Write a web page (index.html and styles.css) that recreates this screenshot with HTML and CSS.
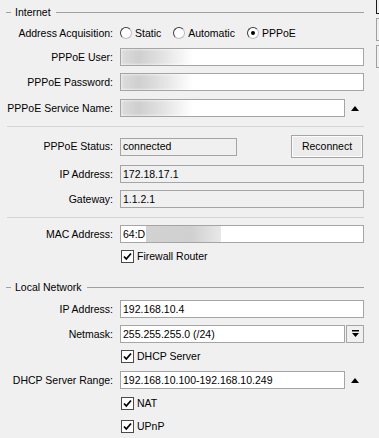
FILE: index.html
```html
<!DOCTYPE html>
<html lang="en">
<head>
    <meta charset="UTF-8">
    <title>Quick Set</title>
    <link rel="stylesheet" href="styles.css">
</head>
<body>
    <div class="page">
        <div class="panel">
            <div class="group-title"><span>Internet</span></div>

            <div class="row radio-row">
                <div class="lbl">Address Acquisition:</div>
                <div class="options">
                    <span class="opt"><span class="radio"></span>Static</span>
                    <span class="opt"><span class="radio"></span>Automatic</span>
                    <span class="opt"><span class="radio on"></span>PPPoE</span>
                </div>
            </div>

            <div class="row mt8">
                <div class="lbl">PPPoE User:</div>
                <div class="field"><span class="blur"></span></div>
            </div>
            <div class="row">
                <div class="lbl">PPPoE Password:</div>
                <div class="field"><span class="blur"></span></div>
            </div>
            <div class="row mt8">
                <div class="lbl">PPPoE Service Name:</div>
                <div class="field short"><span class="blur"></span></div>
                <div class="spin"><span class="up"></span></div>
            </div>

            <!--status section-->
            <div class="sep"></div>

            <div class="row tall mt8">
                <div class="lbl">PPPoE Status:</div>
                <div class="field ro status">connected</div>
                <button class="btn" type="button">Reconnect</button>
            </div>
            <div class="row">
                <div class="lbl">IP Address:</div>
                <div class="field ro">172.18.17.1</div>
            </div>
            <div class="row">
                <div class="lbl">Gateway:</div>
                <div class="field ro">1.1.2.1</div>
            </div>

            <div class="sep"></div>

            <div class="row">
                <div class="lbl">MAC Address:</div>
                <div class="field">64:D<span class="blur mac"></span></div>
            </div>
            <div class="row check">
                <span class="cb"><svg width="11" height="11" viewBox="0 0 11 11"><path d="M2 5.5 L4.3 8 L9 2.5" fill="none" stroke="#000" stroke-width="1.8"/></svg></span>Firewall Router
            </div>

            <div class="group-title local"><span>Local Network</span></div>

            <div class="row mt6">
                <div class="lbl">IP Address:</div>
                <div class="field">192.168.10.4</div>
            </div>
            <div class="row">
                <div class="lbl">Netmask:</div>
                <div class="field short">255.255.255.0 (/24)</div>
                <div class="drop">
                    <svg width="9" height="8" viewBox="0 0 9 8"><rect x="1" y="0" width="7" height="1.5" fill="#000"/><path d="M1 3 L8 3 L4.5 7 Z" fill="#000"/></svg>
                </div>
            </div>
            <div class="row check">
                <span class="cb"><svg width="11" height="11" viewBox="0 0 11 11"><path d="M2 5.5 L4.3 8 L9 2.5" fill="none" stroke="#000" stroke-width="1.8"/></svg></span>DHCP Server
            </div>
            <div class="row mt8">
                <div class="lbl">DHCP Server Range:</div>
                <div class="field short">192.168.10.100-192.168.10.249</div>
                <div class="spin"><span class="up"></span></div>
            </div>
            <div class="row check mt8">
                <span class="cb"><svg width="11" height="11" viewBox="0 0 11 11"><path d="M2 5.5 L4.3 8 L9 2.5" fill="none" stroke="#000" stroke-width="1.8"/></svg></span>NAT
            </div>
            <div class="row check mt10">
                <span class="cb"><svg width="11" height="11" viewBox="0 0 11 11"><path d="M2 5.5 L4.3 8 L9 2.5" fill="none" stroke="#000" stroke-width="1.8"/></svg></span>UPnP
            </div>
        </div>

        <div class="side">
            <div class="side-btn first"></div>
            <div class="side-btn"></div>
            <div class="side-btn"></div>
        </div>
    </div>
</body>
</html>
```

FILE: styles.css
```css
html{
    background: #f0f0f0;
}

body{
    margin: 0;
    overflow: hidden;
    font-family: "Liberation Sans", Arial, sans-serif;
    font-size: 10.5px;
    line-height: 13px;
    color: #000;
}

.page{
    display: flex;
}

.panel{
    width: 364px;
    padding-top: 5px;
}

/* group headers like a fieldset legend */
.group-title{
    display: flex;
    align-items: center;
    height: 14px;
}

.group-title::before{
    content: "";
    width: 5px;
    margin-left: 6px;
    margin-right: 4px;
    border-top: 1px solid #a0a0a0;
}

.group-title::after{
    content: "";
    flex: 1;
    margin-left: 5px;
    border-top: 1px solid #a0a0a0;
}

.group-title.local{
    margin-top: 17px;
}

.row{
    display: flex;
    align-items: center;
    height: 18px;
    margin-top: 7px;
}

.row.tall{
    height: 23px;
}

.mt6{ margin-top: 6px; }
.mt8{ margin-top: 8px; }
.mt10{ margin-top: 10px; }

.radio-row{
    height: 14px;
}

.lbl{
    width: 113px;
    margin-right: 7px;
    text-align: right;
    white-space: nowrap;
    flex: none;
}

.options{
    display: flex;
    gap: 12px;
}

.opt{
    display: flex;
    align-items: center;
    gap: 3px;
}

.radio{
    position: relative;
    width: 12px;
    height: 12px;
    box-sizing: border-box;
    border-radius: 50%;
    border: 1px solid;
    border-color: #3c3c3c #bdbdbd #bdbdbd #3c3c3c;
    background: #fff;
}

.radio.on::after{
    content: "";
    position: absolute;
    left: 3px;
    top: 3px;
    width: 4px;
    height: 4px;
    border-radius: 50%;
    background: #000;
}

.field{
    width: 244px;
    height: 18px;
    box-sizing: border-box;
    border: 1px solid #a5a5a5;
    background: #fff;
    padding: 0 2px;
    display: flex;
    align-items: center;
    white-space: nowrap;
    overflow: hidden;
    flex: none;
}

.field.short{
    width: 225px;
}

.field.ro{
    background: #f0f0f0;
}

.field.status{
    width: 117px;
}

.blur{
    display: block;
    width: 72px;
    height: 16px;
    margin-left: -2px;
    background: linear-gradient(to right, #dcdcdc 0, #cfcfcf 25%, #e4e4e4 60%, #fff 100%);
    filter: blur(1.5px);
}

.blur.mac{
    width: 75px;
    margin-left: 1px;
    background: linear-gradient(to right, #d2d2d2 0, #d0d0d0 60%, #e8e8e8 100%);
    filter: none;
}

.spin{
    width: 19px;
    display: flex;
    justify-content: center;
    align-items: center;
}

.spin .up{
    width: 0;
    height: 0;
    margin-left: 1px;
    border-left: 4.5px solid transparent;
    border-right: 4.5px solid transparent;
    border-bottom: 5px solid #000;
}

.drop{
    width: 18px;
    height: 18px;
    margin-left: 1px;
    box-sizing: border-box;
    border: 1px solid #a5a5a5;
    display: flex;
    justify-content: center;
    align-items: center;
}

.btn{
    width: 72px;
    height: 23px;
    margin-left: 54px;
    padding: 0;
    font: inherit;
    color: #000;
    background: #ececec;
    border: 1px solid #a5a5a5;
    box-shadow: inset 0 0 0 1px #fcfcfc;
}

.sep{
    margin-top: 9px;
    margin-left: 7px;
    border-top: 1px solid #d5d5d5;
}

.row.check{
    height: 13px;
    padding-left: 121px;
}

.cb{
    width: 13px;
    height: 13px;
    box-sizing: border-box;
    border: 1px solid #4a4a4a;
    background: #fff;
    margin-right: 3px;
    display: flex;
    justify-content: center;
    align-items: center;
}

.side{
    width: 3px;
    margin-left: 12px;
    overflow: hidden;
}

.side-btn{
    width: 20px;
    height: 23px;
    box-sizing: border-box;
    margin-top: 4px;
    border: 1px solid #a0a0a0;
}

.side-btn.first{
    height: 14px;
    margin-top: 0;
    border-color: #1a1a1a;
    border-top: none;
}
```
